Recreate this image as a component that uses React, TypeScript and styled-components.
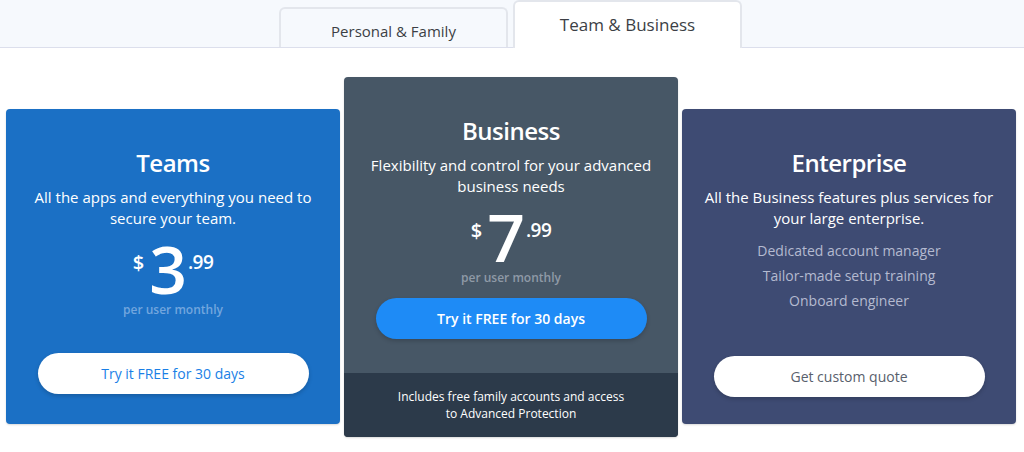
import styled, { createGlobalStyle } from "styled-components";

const GlobalStyle = createGlobalStyle`
  html, body {
    margin: 0;
    padding: 0;
    background: #ffffff;
    font-family: "Open Sans", "Noto Sans", sans-serif;
  }
`;

type Variant = "teams" | "business" | "enterprise";

interface Plan {
  name: string;
  description: string[];
  price?: { whole: string; cents: string };
  features?: string[];
  cta: string;
  variant: Variant;
  footer?: string[];
}

const plans: Plan[] = [
  {
    name: "Teams",
    description: ["All the apps and everything you need to", "secure your team."],
    price: { whole: "3", cents: ".99" },
    cta: "Try it FREE for 30 days",
    variant: "teams",
  },
  {
    name: "Business",
    description: ["Flexibility and control for your advanced", "business needs"],
    price: { whole: "7", cents: ".99" },
    cta: "Try it FREE for 30 days",
    variant: "business",
    footer: ["Includes free family accounts and access", "to Advanced Protection"],
  },
  {
    name: "Enterprise",
    description: ["All the Business features plus services for", "your large enterprise."],
    features: ["Dedicated account manager", "Tailor-made setup training", "Onboard engineer"],
    cta: "Get custom quote",
    variant: "enterprise",
  },
];

const palette = {
  teams: { bg: "#1b70c5", sub: "#72a6de", btnBg: "#ffffff", btnText: "#1a7fe6", bottom: "30px" },
  business: { bg: "#475766", sub: "#8f9aa6", btnBg: "#1e8bf6", btnText: "#ffffff", bottom: "34px" },
  enterprise: { bg: "#3e4b73", sub: "#b4bad0", btnBg: "#ffffff", btnText: "#58606c", bottom: "27px" },
};

const App = () => (
  <Page>
    <GlobalStyle />
    <TabBar>
      <Tab>Personal &amp; Family</Tab>
      <Tab $active>Team &amp; Business</Tab>
    </TabBar>
    <Cards>
      {plans.map((plan) => (
        <Card key={plan.name} $variant={plan.variant}>
          <CardBody $variant={plan.variant}>
            <Title>{plan.name}</Title>
            <Description>
              {plan.description.map((line) => (
                <span key={line}>{line}</span>
              ))}
            </Description>
            {plan.price && (
              <>
                <Price>
                  <Currency>$</Currency>
                  <Whole>{plan.price.whole}</Whole>
                  <Cents>{plan.price.cents}</Cents>
                </Price>
                <PerUser $variant={plan.variant}>per user monthly</PerUser>
              </>
            )}
            {plan.features && (
              <Features>
                {plan.features.map((f) => (
                  <Feature key={f}>{f}</Feature>
                ))}
              </Features>
            )}
            <CtaButton $variant={plan.variant}>{plan.cta}</CtaButton>
          </CardBody>
          {plan.footer && (
            <CardFooter>
              {plan.footer.map((line) => (
                <span key={line}>{line}</span>
              ))}
            </CardFooter>
          )}
        </Card>
      ))}
    </Cards>
  </Page>
);

const Page = styled.div`
  width: 1024px;
  height: 452px;
  overflow: hidden;
  background: #ffffff;
`;

const TabBar = styled.div`
  height: 47px;
  background: #f6f9fd;
  border-bottom: 1px solid #dcdfec;
  display: flex;
  justify-content: center;
  align-items: flex-end;
  gap: 5px;
  padding-right: 3px;
`;

const Tab = styled.div<{ $active?: boolean }>`
  box-sizing: border-box;
  width: 229px;
  height: ${(p) => (p.$active ? "48px" : "40px")};
  margin-bottom: ${(p) => (p.$active ? "-1px" : "0")};
  background: ${(p) => (p.$active ? "#ffffff" : "#f6f9fd")};
  border: 2px solid #e3e6ec;
  border-bottom: none;
  border-radius: 6px 6px 0 0;
  display: flex;
  align-items: ${(p) => (p.$active ? "flex-start" : "center")};
  justify-content: center;
  padding-top: ${(p) => (p.$active ? "11px" : "6px")};
  font-size: ${(p) => (p.$active ? "17px" : "15px")};
  color: #3c3f45;
`;

const Cards = styled.div`
  display: flex;
  align-items: flex-start;
  gap: 4px;
  padding: 29px 8px 0 6px;
`;

const Card = styled.div<{ $variant: Variant }>`
  width: 334px;
  box-sizing: border-box;
  background: ${(p) => palette[p.$variant].bg};
  border-radius: 4px;
  color: #ffffff;
  overflow: hidden;
  margin-top: ${(p) => (p.$variant === "business" ? "0" : "32px")};
  height: ${(p) => (p.$variant === "business" ? "360px" : "315px")};
  display: flex;
  flex-direction: column;
  box-shadow: 0 1px 2px rgba(0, 0, 0, 0.15);
`;

const CardBody = styled.div<{ $variant: Variant }>`
  flex: 1;
  display: flex;
  flex-direction: column;
  align-items: center;
  text-align: center;
  padding: 37px 20px ${(p) => palette[p.$variant].bottom};
`;

const Title = styled.h2`
  margin: 0;
  font-size: 24px;
  font-weight: 600;
  letter-spacing: -0.5px;
  line-height: 34px;
`;

const Description = styled.p`
  margin: 7px 0 0;
  font-size: 15px;
  line-height: 21px;
  display: flex;
  flex-direction: column;
`;

const Price = styled.div`
  display: flex;
  align-items: flex-start;
  justify-content: center;
  margin-top: 6px;
  height: 66px;
`;

const Currency = styled.span`
  font-size: 20px;
  font-weight: 600;
  line-height: 20px;
  margin-top: 18px;
  margin-right: 5px;
`;

const Whole = styled.span`
  font-size: 66px;
  font-weight: 600;
  line-height: 66px;
  letter-spacing: -1px;
`;

const Cents = styled.span`
  font-size: 19px;
  font-weight: 600;
  line-height: 20px;
  margin-top: 17px;
  margin-left: 2px;
  letter-spacing: -0.5px;
`;

const PerUser = styled.div<{ $variant: Variant }>`
  font-size: 12px;
  font-weight: 600;
  color: ${(p) => palette[p.$variant].sub};
  margin-top: 0;
  line-height: 18px;
`;

const Features = styled.ul`
  list-style: none;
  margin: 9px 0 0;
  padding: 0;
  display: flex;
  flex-direction: column;
`;

const Feature = styled.li`
  font-size: 14px;
  line-height: 25px;
  color: #b4bad0;
`;

const CtaButton = styled.button<{ $variant: Variant }>`
  margin-top: auto;
  width: 271px;
  height: 41px;
  border: none;
  border-radius: 21px;
  background: ${(p) => palette[p.$variant].btnBg};
  color: ${(p) => palette[p.$variant].btnText};
  font-family: inherit;
  font-size: 14px;
  font-weight: ${(p) => (p.$variant === "business" ? 600 : 500)};
  box-shadow: 0 2px 4px rgba(0, 0, 0, 0.18);
  cursor: pointer;
`;

const CardFooter = styled.div`
  height: 64px;
  background: #2c3a4a;
  display: flex;
  flex-direction: column;
  align-items: center;
  justify-content: center;
  font-size: 12px;
  line-height: 17px;
`;

export default App;
